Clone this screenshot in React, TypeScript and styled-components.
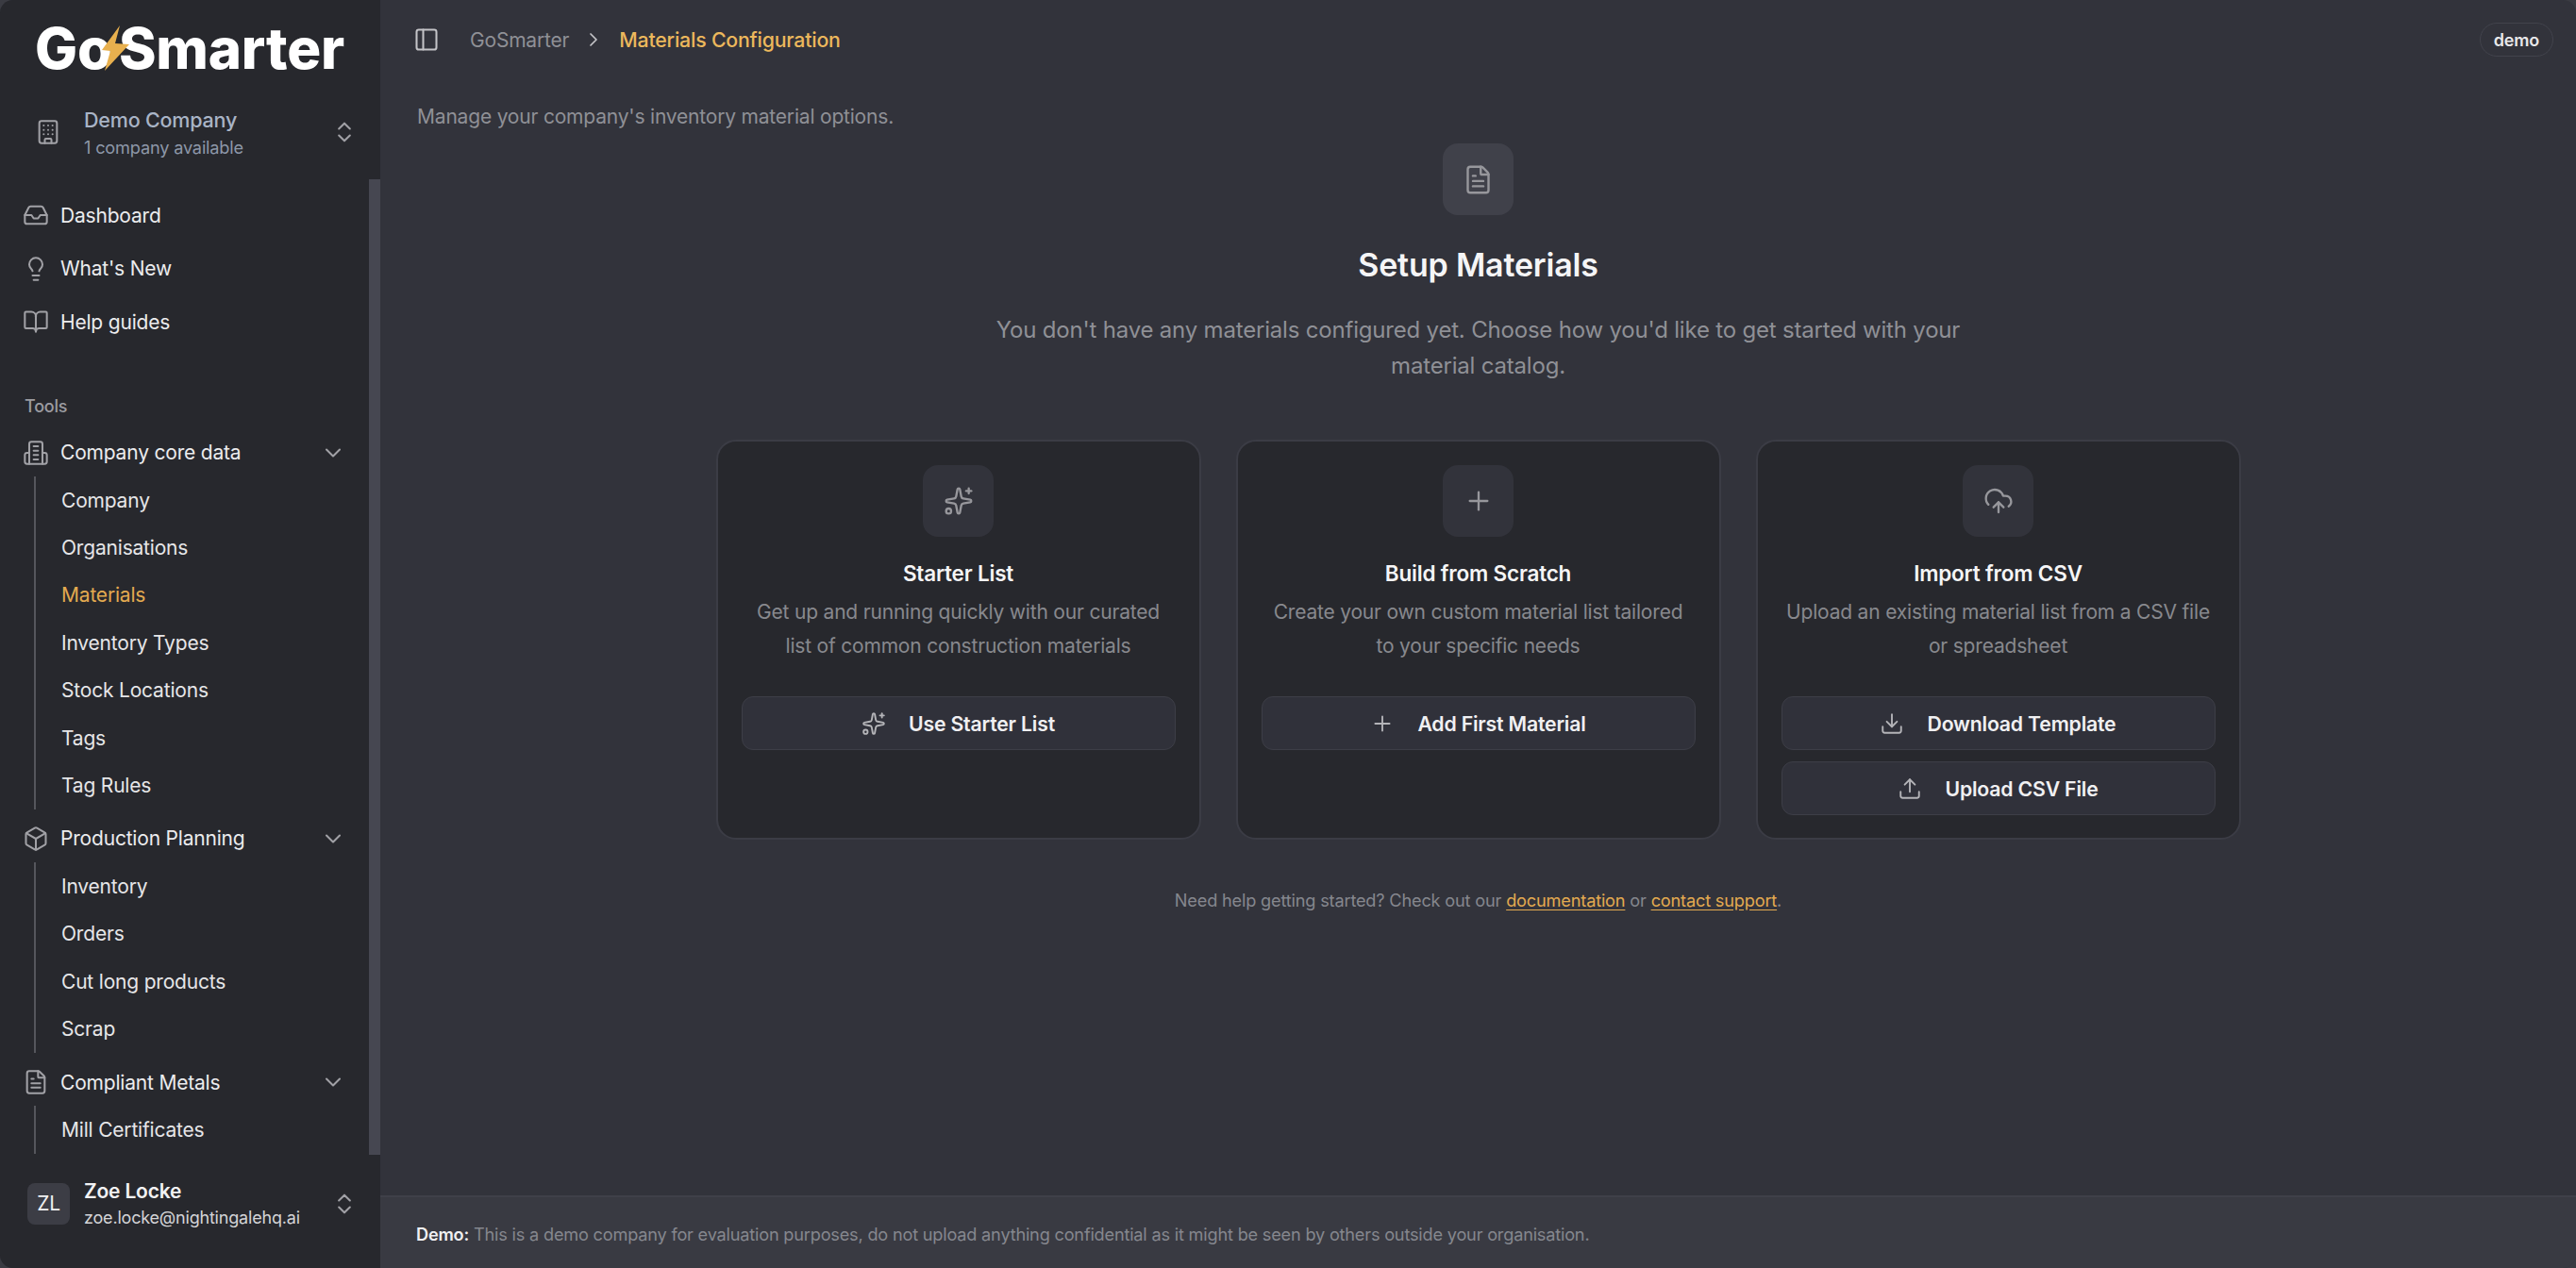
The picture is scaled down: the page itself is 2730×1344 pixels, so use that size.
import React from "react";
import styled, { createGlobalStyle } from "styled-components";
import {
  BookOpen,
  Box,
  Building,
  ChevronDown,
  ChevronRight,
  ChevronsUpDown,
  CloudUpload,
  Download,
  FileText,
  Inbox,
  Lightbulb,
  LucideIcon,
  PanelLeft,
  Plus,
  Sparkles,
  Upload,
} from "lucide-react";

const GlobalStyle = createGlobalStyle`
  html, body {
    margin: 0;
    padding: 0;
    background: #3a3b42;
    overflow: hidden;
  }

  * {
    box-sizing: border-box;
  }
`;

const Shell = styled.div`
  display: flex;
  width: 2730px;
  height: 1344px;
  border-radius: 14px;
  overflow: hidden;
  background: #32333b;
  font-family: Inter, "Liberation Sans", sans-serif;
  letter-spacing: -0.012em;
  color: #f2f2f3;
`;

const Sidebar = styled.aside`
  display: flex;
  flex-direction: column;
  flex: none;
  width: 403px;
  background: #27282d;
`;

const LogoBlock = styled.div`
  display: flex;
  align-items: center;
  height: 98px;
  padding: 4px 0 0 37px;
`;

const LogoWord = styled.span`
  font-size: 60px;
  font-weight: 800;
  letter-spacing: -0.2px;
  line-height: 1;
  color: #ffffff;
`;

const LogoBolt = styled.svg`
  flex: none;
  width: 30px;
  height: 48px;
  margin: 0 -12px 0 -11px;
  position: relative;
  z-index: 1;
`;

const Switcher = styled.div`
  display: flex;
  align-items: center;
  height: 84px;
  margin-bottom: 8px;
  padding: 0 24px 0 37px;
  color: #a1a1a6;
`;

const SwitcherText = styled.div`
  display: flex;
  flex: 1;
  flex-direction: column;
  gap: 3px;
  margin-left: 24px;
  min-width: 0;
`;

const CompanyName = styled.span`
  font-size: 21.5px;
  font-weight: 500;
  line-height: 28px;
  color: #a9b4c6;
`;

const CompanySub = styled.span`
  font-size: 18.2px;
  line-height: 24px;
  color: #8d97a8;
`;

const NavScroll = styled.div`
  position: relative;
  flex: 1;
  min-height: 0;
  overflow: hidden;
  padding-top: 10px;
`;

const ScrollThumb = styled.div`
  position: absolute;
  top: 0;
  right: 0;
  bottom: 0;
  width: 12px;
  background: #464751;
`;

const NavRow = styled.div`
  display: flex;
  align-items: center;
  gap: 12px;
  height: 56.5px;
  padding-left: 24px;
  font-size: 21px;
  color: #ececee;

  svg {
    flex: none;
    color: #a1a1a6;
  }
`;

const GroupRow = styled(NavRow)`
  padding-bottom: 2px;
`;

const NavLabel = styled.span`
  flex: 1;
`;

const GroupChevron = styled.span`
  display: flex;
  margin-right: 36px;
`;

const ToolsLabel = styled.div`
  height: 36px;
  margin: 43px 0 4px;
  padding-left: 26px;
  font-size: 18px;
  font-weight: 500;
  line-height: 36px;
  color: #9c9ca1;
`;

const SubList = styled.div`
  margin: -4px 0 4px 36px;
  padding-left: 27px;
  border-left: 2px solid #55565c;
`;

const SubItem = styled.div<{ $active?: boolean }>`
  display: flex;
  align-items: center;
  height: 50.4px;
  font-size: 21px;
  color: ${({ $active }) => ($active ? "#e3aa50" : "#e6e6e8")};
`;

const UserBlock = styled.div`
  display: flex;
  flex: none;
  align-items: center;
  height: 120px;
  padding: 0 24px 17px 29px;
  color: #a1a1a6;
`;

const Avatar = styled.div`
  display: flex;
  flex: none;
  align-items: center;
  justify-content: center;
  width: 45px;
  height: 44px;
  border-radius: 8px;
  background: #3c3d45;
  font-size: 21px;
  color: #f0f0f1;
`;

const UserText = styled.div`
  display: flex;
  flex: 1;
  flex-direction: column;
  margin-left: 15px;
  min-width: 0;
`;

const UserName = styled.span`
  font-size: 21px;
  font-weight: 600;
  line-height: 30px;
  color: #f2f2f3;
`;

const UserEmail = styled.span`
  font-size: 18px;
  line-height: 26px;
  color: #d4d4d7;
`;

const Main = styled.main`
  display: flex;
  flex: 1;
  flex-direction: column;
  min-width: 0;
`;

const Header = styled.header`
  display: flex;
  flex: none;
  align-items: center;
  height: 84px;
  padding: 0 24px 0 35px;
`;

const Crumbs = styled.nav`
  display: flex;
  flex: 1;
  align-items: center;
  font-size: 21px;
  color: #8f9096;

  svg {
    flex: none;
  }
`;

const ToggleIcon = styled.span`
  display: flex;
  margin-right: 32px;
  color: #c4c4c8;
`;

const CrumbCurrent = styled.span`
  font-size: 21.3px;
  font-weight: 500;
  color: #ecb85c;
`;

const CrumbSep = styled.span`
  display: flex;
  margin: 0 15px 0 14px;
  color: #c4c4c8;
`;

const Badge = styled.span`
  display: flex;
  align-items: center;
  height: 36px;
  padding: 0 14px;
  border: 1.75px solid #42434c;
  border-radius: 18px;
  font-size: 18px;
  font-weight: 600;
  color: #e8e8ea;
`;

const Content = styled.div`
  display: flex;
  flex: 1;
  flex-direction: column;
  align-items: center;
  min-height: 0;
  padding: 0 38px;
`;

const Lead = styled.p`
  align-self: stretch;
  margin: 26px 0 14px;
  padding-left: 1px;
  font-size: 21px;
  line-height: 28px;
  color: #8f9096;
`;

const Tile = styled.div<{ $tone: "page" | "card" }>`
  display: flex;
  flex: none;
  align-items: center;
  justify-content: center;
  width: 75px;
  height: 76px;
  border-radius: 16px;
  background: ${({ $tone }) => ($tone === "page" ? "#40414a" : "#32333b")};
  color: #97979c;
`;

const Title = styled.h1`
  margin: 32px 0 0;
  font-size: 34px;
  font-weight: 600;
  line-height: 42px;
  color: #f5f5f6;
`;

const Intro = styled.p`
  width: 1050px;
  margin: 29px 0 0;
  font-size: 24px;
  line-height: 38px;
  text-align: center;
  color: #8f9096;
`;

const CardGrid = styled.div`
  display: grid;
  grid-template-columns: repeat(3, 514px);
  gap: 37px;
  margin-top: 59px;
`;

const Card = styled.section`
  display: flex;
  flex-direction: column;
  align-items: center;
  height: 424px;
  padding: 25px 25px 0;
  border: 2px solid #3b3c45;
  border-radius: 21px;
  background: #27282d;
`;

const CardTitle = styled.h2`
  margin: 23px 0 0;
  font-size: 22.5px;
  font-weight: 600;
  line-height: 32px;
  color: #f5f5f6;
`;

const CardText = styled.p`
  margin: 7px 0 0;
  font-size: 21px;
  line-height: 36px;
  text-align: center;
  color: #88898e;
`;

const Actions = styled.div`
  display: flex;
  flex-direction: column;
  gap: 12px;
  align-self: stretch;
  margin-top: 35px;
`;

const ActionButton = styled.button`
  display: flex;
  align-items: center;
  justify-content: center;
  gap: 24px;
  height: 57px;
  border: 1.75px solid #3d3e47;
  border-radius: 12px;
  background: #30313a;
  font-family: inherit;
  font-size: 21.25px;
  font-weight: 600;
  letter-spacing: inherit;
  color: #f0f0f2;

  svg {
    color: #b4b4b8;
  }
`;

const Help = styled.p`
  margin: 50px 0 0;
  font-size: 18.2px;
  line-height: 28px;
  color: #85878e;
`;

const HelpLink = styled.a`
  color: #e3aa50;
  text-decoration: underline;
  text-underline-offset: 3px;
`;

const DemoBar = styled.footer`
  display: flex;
  flex: none;
  align-items: center;
  height: 77px;
  padding: 2px 38px 0;
  border-top: 2px solid #3f4049;
  background: #393a42;
  font-size: 18.15px;
  color: #85878e;
`;

const DemoStrong = styled.strong`
  margin-right: 5px;
  font-weight: 600;
  color: #f0f0f2;
`;

interface NavEntry {
  icon: LucideIcon | typeof CoreDataIcon;
  label: string;
  items: { label: string; active?: boolean }[];
}

// lucide's current Building2 has a door, the one in the picture has four bars
function CoreDataIcon(props: { size?: number; strokeWidth?: number }) {
  const { size = 28, strokeWidth = 1.75 } = props;

  return (
    <svg
      width={size}
      height={size}
      viewBox="0 0 24 24"
      fill="none"
      stroke="currentColor"
      strokeWidth={strokeWidth}
      strokeLinecap="round"
      strokeLinejoin="round"
    >
      <path d="M6 22V4a2 2 0 0 1 2-2h8a2 2 0 0 1 2 2v18Z" />
      <path d="M6 12H4a2 2 0 0 0-2 2v6a2 2 0 0 0 2 2h2" />
      <path d="M18 12h2a2 2 0 0 1 2 2v6a2 2 0 0 1-2 2h-2" />
      <path d="M10 6h4" />
      <path d="M10 10h4" />
      <path d="M10 14h4" />
      <path d="M10 18h4" />
    </svg>
  );
}

const topLinks = [
  { icon: Inbox, label: "Dashboard" },
  { icon: Lightbulb, label: "What's New" },
  { icon: BookOpen, label: "Help guides" },
];

const groups: NavEntry[] = [
  {
    icon: CoreDataIcon,
    label: "Company core data",
    items: [
      { label: "Company" },
      { label: "Organisations" },
      { label: "Materials", active: true },
      { label: "Inventory Types" },
      { label: "Stock Locations" },
      { label: "Tags" },
      { label: "Tag Rules" },
    ],
  },
  {
    icon: Box,
    label: "Production Planning",
    items: [
      { label: "Inventory" },
      { label: "Orders" },
      { label: "Cut long products" },
      { label: "Scrap" },
    ],
  },
  {
    icon: FileText,
    label: "Compliant Metals",
    items: [{ label: "Mill Certificates" }],
  },
];

const options = [
  {
    icon: Sparkles,
    title: "Starter List",
    text: ["Get up and running quickly with our curated", "list of common construction materials"],
    actions: [{ icon: Sparkles, label: "Use Starter List" }],
  },
  {
    icon: Plus,
    title: "Build from Scratch",
    text: ["Create your own custom material list tailored", "to your specific needs"],
    actions: [{ icon: Plus, label: "Add First Material" }],
  },
  {
    icon: CloudUpload,
    title: "Import from CSV",
    text: ["Upload an existing material list from a CSV file", "or spreadsheet"],
    actions: [
      { icon: Download, label: "Download Template" },
      { icon: Upload, label: "Upload CSV File" },
    ],
  },
];

function App(): JSX.Element {
  return (
    <Shell>
      <GlobalStyle />
      <Sidebar>
        <LogoBlock>
          <LogoWord>Go</LogoWord>
          <LogoBolt viewBox="0 0 30 48">
            <path d="M19 0 L14 19 L29 20 L3 48 L9 27 L0 26 Z" fill="#e8b04e" />
          </LogoBolt>
          <LogoWord>Smarter</LogoWord>
        </LogoBlock>

        <Switcher>
          <Building size={28} strokeWidth={1.75} />
          <SwitcherText>
            <CompanyName>Demo Company</CompanyName>
            <CompanySub>1 company available</CompanySub>
          </SwitcherText>
          <ChevronsUpDown size={28} strokeWidth={1.75} />
        </Switcher>

        <NavScroll>
          <ScrollThumb />
          {topLinks.map(({ icon: Icon, label }) => (
            <NavRow key={label}>
              <Icon size={28} strokeWidth={1.75} />
              <NavLabel>{label}</NavLabel>
            </NavRow>
          ))}

          <ToolsLabel>Tools</ToolsLabel>

          {groups.map(({ icon: Icon, label, items }) => (
            <div key={label}>
              <GroupRow>
                <Icon size={28} strokeWidth={1.75} />
                <NavLabel>{label}</NavLabel>
                <GroupChevron>
                  <ChevronDown size={28} strokeWidth={1.75} />
                </GroupChevron>
              </GroupRow>
              <SubList>
                {items.map((item) => (
                  <SubItem key={item.label} $active={item.active}>
                    {item.label}
                  </SubItem>
                ))}
              </SubList>
            </div>
          ))}
        </NavScroll>

        <UserBlock>
          <Avatar>ZL</Avatar>
          <UserText>
            <UserName>Zoe Locke</UserName>
            <UserEmail>zoe.locke@nightingalehq.ai</UserEmail>
          </UserText>
          <ChevronsUpDown size={28} strokeWidth={1.75} />
        </UserBlock>
      </Sidebar>

      <Main>
        <Header>
          <Crumbs>
            <ToggleIcon>
              <PanelLeft size={28} strokeWidth={1.75} />
            </ToggleIcon>
            <span>GoSmarter</span>
            <CrumbSep>
              <ChevronRight size={24} strokeWidth={1.75} />
            </CrumbSep>
            <CrumbCurrent>Materials Configuration</CrumbCurrent>
          </Crumbs>
          <Badge>demo</Badge>
        </Header>

        <Content>
          <Lead>Manage your company's inventory material options.</Lead>
          <Tile $tone="page">
            <FileText size={33} strokeWidth={1.75} />
          </Tile>
          <Title>Setup Materials</Title>
          <Intro>
            You don't have any materials configured yet. Choose how you'd like
            to get started with your material catalog.
          </Intro>

          <CardGrid>
            {options.map(({ icon: Icon, title, text, actions }) => (
              <Card key={title}>
                <Tile $tone="card">
                  <Icon size={32} strokeWidth={1.75} />
                </Tile>
                <CardTitle>{title}</CardTitle>
                <CardText>
                  {text[0]}
                  <br />
                  {text[1]}
                </CardText>
                <Actions>
                  {actions.map(({ icon: ActionIcon, label }) => (
                    <ActionButton key={label}>
                      <ActionIcon size={26} strokeWidth={1.75} />
                      {label}
                    </ActionButton>
                  ))}
                </Actions>
              </Card>
            ))}
          </CardGrid>

          <Help>
            Need help getting started? Check out our{" "}
            <HelpLink>documentation</HelpLink> or{" "}
            <HelpLink>contact support</HelpLink>.
          </Help>
        </Content>

        <DemoBar>
          <DemoStrong>Demo:</DemoStrong>
          This is a demo company for evaluation purposes, do not upload anything
          confidential as it might be seen by others outside your organisation.
        </DemoBar>
      </Main>
    </Shell>
  );
}

export default App;
